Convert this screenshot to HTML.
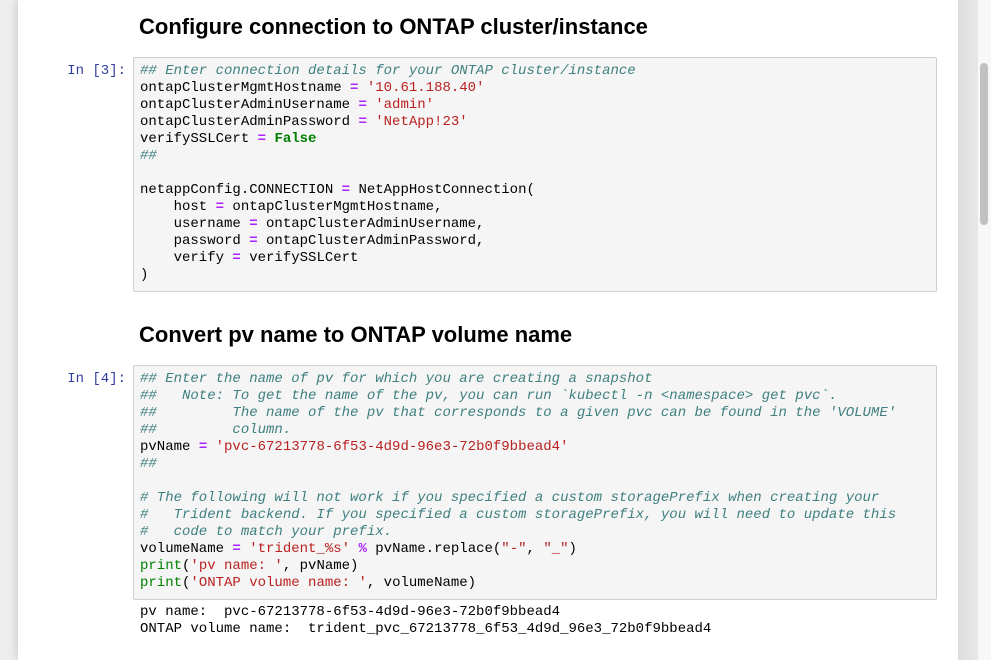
<!DOCTYPE html>
<html><head><meta charset="utf-8"><style>
body{margin:0;width:991px;height:660px;overflow:hidden;background:#eee;position:relative;font-family:"Liberation Sans",sans-serif}
.page{position:absolute;left:18px;top:0;width:940px;height:660px;background:#fff;box-shadow:0 0 10px rgba(0,0,0,.2)}
.rgut{position:absolute;left:958px;top:0;width:19px;height:660px;background:linear-gradient(90deg,#ddd,#e8e8e8)}
.track{position:absolute;left:977px;top:0;width:14px;height:660px;background:#f8f8f8;border-left:1px solid #e6e6e6}
.thumb{position:absolute;left:980px;top:63px;width:8px;height:162px;background:#c1c1c1;border-radius:4px}
h2{position:absolute;left:139px;margin:0;font-size:22px;font-weight:bold;color:#000;line-height:26px}
.prompt{position:absolute;font:14px/17px "Liberation Mono",monospace;color:#303f9f;width:126px;left:0;text-align:right}
.cell{position:absolute;left:133px;width:790px;background:#f5f5f5;border:1px solid #cfcfcf;border-radius:2px;padding:5px 6px 7px 6px}
pre{margin:0;font:14px/17px "Liberation Mono",monospace;color:#000;white-space:pre}
.c{color:#408080;font-style:italic}.s{color:#ba2121}.o{color:#aa22ff;font-weight:bold}.k{color:#008000;font-weight:bold}.b{color:#008000}
.out{position:absolute;left:140px;top:604px}
</style></head><body>
<div class="page"></div>
<div class="rgut"></div><div class="track"></div><div class="thumb"></div>
<h2 style="top:14px">Configure connection to ONTAP cluster/instance</h2>
<div class="prompt" style="top:63px">In [3]:</div>
<div class="cell" style="top:57px"><pre><span class="c">## Enter connection details for your ONTAP cluster/instance</span>
ontapClusterMgmtHostname <span class="o">=</span> <span class="s">'10.61.188.40'</span>
ontapClusterAdminUsername <span class="o">=</span> <span class="s">'admin'</span>
ontapClusterAdminPassword <span class="o">=</span> <span class="s">'NetApp!23'</span>
verifySSLCert <span class="o">=</span> <span class="k">False</span>
<span class="c">##</span>

netappConfig.CONNECTION <span class="o">=</span> NetAppHostConnection(
    host <span class="o">=</span> ontapClusterMgmtHostname,
    username <span class="o">=</span> ontapClusterAdminUsername,
    password <span class="o">=</span> ontapClusterAdminPassword,
    verify <span class="o">=</span> verifySSLCert
)</pre></div>
<h2 style="top:322px">Convert pv name to ONTAP volume name</h2>
<div class="prompt" style="top:371px">In [4]:</div>
<div class="cell" style="top:365px"><pre><span class="c">## Enter the name of pv for which you are creating a snapshot</span>
<span class="c">##   Note: To get the name of the pv, you can run `kubectl -n &lt;namespace&gt; get pvc`.</span>
<span class="c">##         The name of the pv that corresponds to a given pvc can be found in the 'VOLUME'</span>
<span class="c">##         column.</span>
pvName <span class="o">=</span> <span class="s">'pvc-67213778-6f53-4d9d-96e3-72b0f9bbead4'</span>
<span class="c">##</span>

<span class="c"># The following will not work if you specified a custom storagePrefix when creating your</span>
<span class="c">#   Trident backend. If you specified a custom storagePrefix, you will need to update this</span>
<span class="c">#   code to match your prefix.</span>
volumeName <span class="o">=</span> <span class="s">'trident_%s'</span> <span class="o">%</span> pvName.replace(<span class="s">"-"</span>, <span class="s">"_"</span>)
<span class="b">print</span>(<span class="s">'pv name: '</span>, pvName)
<span class="b">print</span>(<span class="s">'ONTAP volume name: '</span>, volumeName)</pre></div>
<div class="out"><pre>pv name:  pvc-67213778-6f53-4d9d-96e3-72b0f9bbead4
ONTAP volume name:  trident_pvc_67213778_6f53_4d9d_96e3_72b0f9bbead4</pre></div>
</body></html>
